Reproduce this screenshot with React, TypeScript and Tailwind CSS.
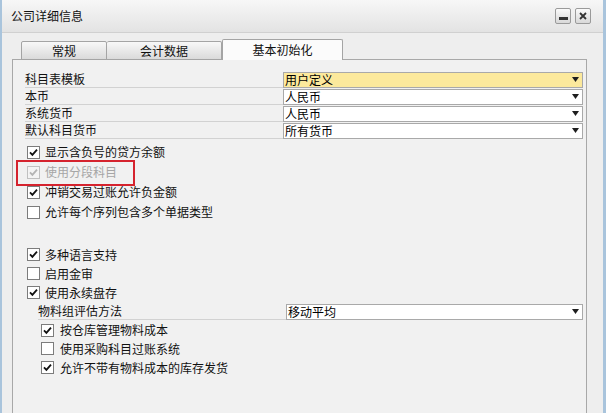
import React from "react";

function Check({ checked, disabled }: { checked?: boolean; disabled?: boolean }) {
  return (
    <span
      className={`w-[13px] h-[13px] border ${
        disabled ? "border-[#c0c0c0] bg-[#f4f4f4]" : "border-[#7c7c7c] bg-white"
      } flex items-center justify-center shrink-0`}
    >
      {checked && (
        <svg width="9" height="9" viewBox="0 0 9 9">
          <path
            d="M1 4.3 L3.4 6.8 L8 1.6"
            stroke={disabled ? "#b4b4b4" : "#111"}
            strokeWidth="1.8"
            fill="none"
          />
        </svg>
      )}
    </span>
  );
}

function Select({ value, yellow }: { value: string; yellow?: boolean }) {
  return (
    <div
      className={`h-[16px] w-full border border-[#a9a9a9] ${
        yellow ? "bg-[#fce99c]" : "bg-white"
      } flex items-center justify-between pl-[1px] pr-[3px] text-[12px] leading-none text-black`}
    >
      <span>{value}</span>
      <svg width="7" height="5" viewBox="0 0 7 5">
        <path d="M0 0H7L3.5 5Z" fill="#1e1e1e" />
      </svg>
    </div>
  );
}

function FieldRow({ label, value, yellow }: { label: string; value: string; yellow?: boolean }) {
  return (
    <div className="flex h-[17px] items-center">
      <div className="w-[258px] h-full flex items-center border-b border-[#d2d2d2] text-[12px] leading-none">
        {label}
      </div>
      <div className="w-[300px]">
        <Select value={value} yellow={yellow} />
      </div>
    </div>
  );
}

function CheckRow({
  label,
  checked,
  disabled,
  h,
  indent,
}: {
  label: string;
  checked?: boolean;
  disabled?: boolean;
  h: string;
  indent?: boolean;
}) {
  return (
    <div className={`flex items-center ${h} ${indent ? "pl-[16px] gap-[6px]" : "pl-[2px] gap-[5px]"}`}>
      <Check checked={checked} disabled={disabled} />
      <span className={`text-[12px] leading-none ${disabled ? "text-[#a6a6a6]" : "text-[#111]"}`}>{label}</span>
    </div>
  );
}

export default function App() {
  return (
    <div className="w-[606px] h-[413px] overflow-hidden bg-[#eeeeee] border-l-[2px] border-r-[3px] border-[#a9c4dc] font-['Noto_Sans_CJK_SC',sans-serif] text-[#111]">
      {/* Title bar */}
      <div className="h-[33px] flex items-center justify-between pl-[9px] pr-[12px] bg-gradient-to-b from-[#f7f7f7] to-[#e3e3e3] border-b border-[#d0d0d0]">
        <span className="text-[12px] leading-none text-[#111]">公司详细信息</span>
        <div className="flex gap-[4px] items-center">
          <div className="w-[16px] h-[16px] border border-[#9a9a9a] rounded-[2px] bg-gradient-to-b from-[#fafafa] to-[#d8d8d8] flex items-end justify-center pb-[3px]">
            <div className="w-[9px] h-[3px] bg-[#333]" />
          </div>
          <div className="w-[16px] h-[16px] border border-[#9a9a9a] rounded-[2px] bg-gradient-to-b from-[#fafafa] to-[#d8d8d8] flex items-center justify-center">
            <svg width="8" height="8" viewBox="0 0 8 8">
              <path d="M1 1L7 7M7 1L1 7" stroke="#333" strokeWidth="1.8" />
            </svg>
          </div>
        </div>
      </div>

      {/* Body */}
      <div className="pl-[10px] pt-[6px]">
        {/* Tabs */}
        <div className="flex items-end h-[21px] ml-[9px] relative z-10 -mb-px">
          <div className="w-[86px] h-[19px] border border-[#a4a4a4] rounded-t-[2px] bg-gradient-to-b from-[#f8f8f8] to-[#dadada] flex items-center justify-center text-[12px] leading-none">
            常规
          </div>
          <div className="w-[115px] h-[19px] border border-l-0 border-[#a4a4a4] rounded-t-[2px] bg-gradient-to-b from-[#f8f8f8] to-[#dadada] flex items-center justify-center text-[12px] leading-none">
            会计数据
          </div>
          <div className="w-[121px] h-[21px] border border-b-0 border-[#a4a4a4] rounded-t-[2px] bg-[#fbfbfb] flex items-center justify-center text-[12px] leading-none">
            基本初始化
          </div>
        </div>

        {/* Panel */}
        <div className="relative w-[575px] h-[360px] border border-b-0 border-[#a8a8a8] bg-[#f1f1f1] pl-[12px] pt-[11px]">
          <FieldRow label="科目表模板" value="用户定义" yellow />
          <FieldRow label="本币" value="人民币" />
          <FieldRow label="系统货币" value="人民币" />
          <FieldRow label="默认科目货币" value="所有货币" />

          <div className="pt-[3px]">
            <CheckRow h="h-[20px]" checked label="显示含负号的贷方余额" />
            <CheckRow h="h-[20px]" checked disabled label="使用分段科目" />
            <CheckRow h="h-[20px]" checked label="冲销交易过账允许负金额" />
            <CheckRow h="h-[20px]" label="允许每个序列包含多个单据类型" />
          </div>

          <div className="pt-[23px]">
            <CheckRow h="h-[19px]" checked label="多种语言支持" />
            <CheckRow h="h-[19px]" label="启用金审" />
            <CheckRow h="h-[19px]" checked label="使用永续盘存" />
          </div>

          <div className="flex h-[17px] items-center mt-[1px]">
            <div className="ml-[13px] w-[248px] h-full flex items-center border-b border-[#d2d2d2] text-[12px] leading-none">
              物料组评估方法
            </div>
            <div className="w-[297px]">
              <Select value="移动平均" />
            </div>
          </div>

          <div className="pt-[1px]">
            <CheckRow h="h-[18px]" indent checked label="按仓库管理物料成本" />
            <CheckRow h="h-[19px]" indent label="使用采购科目过账系统" />
            <CheckRow h="h-[19px]" indent checked label="允许不带有物料成本的库存发货" />
          </div>

          {/* Red highlight */}
          <div className="absolute left-[3px] top-[100px] w-[119px] h-[26px] border-[2.5px] border-[#d5232e]" />
        </div>
      </div>
    </div>
  );
}
